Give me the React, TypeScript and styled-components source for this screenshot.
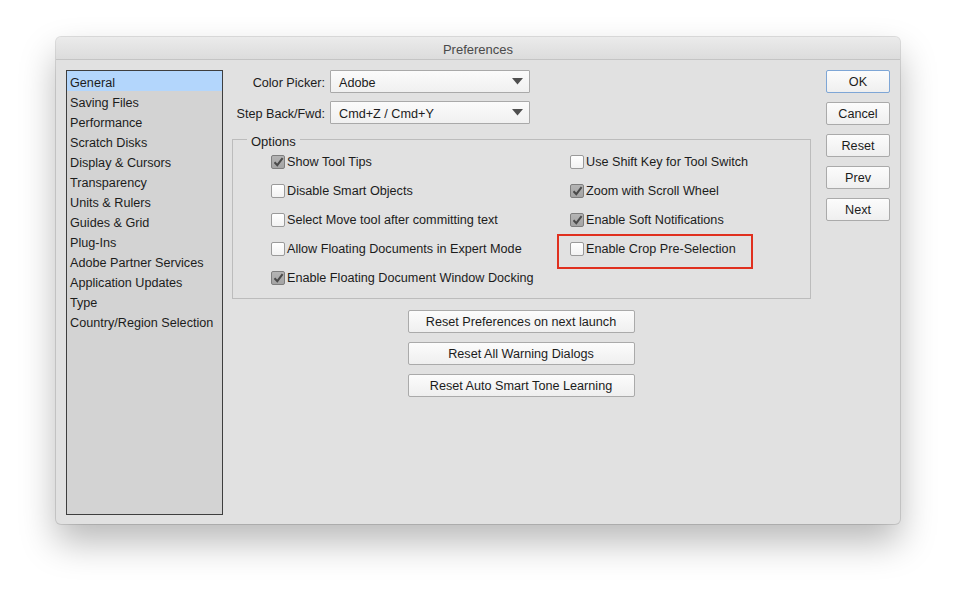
import React from "react";
import styled, { createGlobalStyle } from "styled-components";

const Global = createGlobalStyle`
  html, body { margin: 0; padding: 0; background: #ffffff; }
  body { font-family: "Liberation Sans", Arial, sans-serif; font-size: 12.65px; color: #1c1c1c; }
  * { box-sizing: border-box; }
`;

const Page = styled.div`
  width: 956px;
  height: 599px;
  padding: 37px 0 0 56px;
  background: #ffffff;
`;

const Window = styled.div`
  width: 844px;
  height: 487px;
  border-radius: 5px;
  background: #e1e1e1;
  box-shadow: 0 0 0 1px rgba(0, 0, 0, 0.12), 0 18px 36px rgba(0, 0, 0, 0.28);
  display: flex;
  flex-direction: column;
  overflow: hidden;
`;

const TitleBar = styled.div`
  height: 23px;
  flex: none;
  display: flex;
  align-items: center;
  justify-content: center;
  padding-top: 2px;
  background: linear-gradient(#ebebeb, #dcdcdc);
  border-bottom: 1px solid #c4c4c4;
  color: #4a4a4a;
  font-size: 13px;
`;

const Body = styled.div`
  flex: 1;
  display: flex;
  padding: 10px;
  gap: 8px;
`;

const Sidebar = styled.ul`
  margin: 0;
  width: 157px;
  height: 445px;
  flex: none;
  list-style: none;
  padding: 0;
  background: #d3d3d3;
  border: 1px solid #3e3e3e;
`;

const SideItem = styled.li<{ $selected?: boolean }>`
  height: 20px;
  line-height: 24px;
  padding-left: 3px;
  white-space: nowrap;
  overflow: hidden;
  background: ${(p) => (p.$selected ? "#b3d6fc" : "transparent")};
`;

const Main = styled.div`
  width: 580px;
  flex: none;
  display: flex;
  flex-direction: column;
`;

const FormGrid = styled.div`
  display: grid;
  grid-template-columns: 94px 200px;
  grid-auto-rows: 23px;
  column-gap: 5px;
  row-gap: 8px;
`;

const Label = styled.label`
  display: flex;
  align-items: center;
  justify-content: flex-end;
  padding-top: 2px;
  white-space: nowrap;
`;

const Select = styled.div`
  display: flex;
  align-items: center;
  justify-content: space-between;
  padding: 2px 6px 0 8px;
  background: linear-gradient(#fbfbfb, #f0f0f0);
  border: 1px solid #a9a9a9;
  border-radius: 1px;
`;

const Arrow = styled.svg`
  width: 11px;
  height: 7px;
  margin-top: -2px;
`;

const Group = styled.fieldset`
  margin: 5px 0 0 1px;
  padding: 4px 0 12px 14px;
  border: 1px solid #bcbcbc;
  border-radius: 0;
`;

const Legend = styled.legend`
  margin-left: 0;
  padding: 5px 4px 0 4px;
  line-height: 16px;
  font-size: 13px;
`;

const OptionGrid = styled.div`
  margin-left: 24px;
  display: grid;
  grid-template-columns: 299px 240px;
  grid-auto-rows: 16px;
  row-gap: 13px;
`;

const Option = styled.label<{ $highlight?: boolean }>`
  position: relative;
  display: flex;
  align-items: center;
  gap: 2px;
  white-space: nowrap;
  &::after {
    content: "";
    display: ${(p) => (p.$highlight ? "block" : "none")};
    position: absolute;
    left: -13px;
    top: -7px;
    width: 192px;
    height: 31px;
    border: 2px solid #e0301e;
    pointer-events: none;
  }
`;

const Box = styled.span<{ $checked?: boolean }>`
  width: 14px;
  height: 14px;
  flex: none;
  display: flex;
  align-items: center;
  justify-content: center;
  border: 1px solid ${(p) => (p.$checked ? "#7e7e7e" : "#9a9a9a")};
  border-radius: 2px;
  background: ${(p) => (p.$checked ? "linear-gradient(#b4b4b4, #a4a4a4)" : "linear-gradient(#ffffff, #f2f2f2)")};
`;

const Check = styled.svg`
  width: 11px;
  height: 10px;
`;

const ResetStack = styled.div`
  margin-top: 11px;
  display: flex;
  flex-direction: column;
  align-items: center;
  gap: 9px;
`;

const Button = styled.button<{ $wide?: boolean; $default?: boolean }>`
  width: ${(p) => (p.$wide ? "227px" : "64px")};
  height: 23px;
  padding: 1px 0 0;
  font-family: "Liberation Sans", Arial, sans-serif;
  font-size: 12.65px;
  color: #1c1c1c;
  background: linear-gradient(#fcfcfc, #efefef);
  border: 1px solid ${(p) => (p.$default ? "#7ea6d6" : "#aaaaaa")};
  border-radius: 2px;
`;

const Side = styled.div`
  margin-left: 7px;
  display: flex;
  flex-direction: column;
  gap: 9px;
`;

const sideItems = [
  "General",
  "Saving Files",
  "Performance",
  "Scratch Disks",
  "Display & Cursors",
  "Transparency",
  "Units & Rulers",
  "Guides & Grid",
  "Plug-Ins",
  "Adobe Partner Services",
  "Application Updates",
  "Type",
  "Country/Region Selection",
];

type Opt = { label: string; checked?: boolean; highlight?: boolean };

const options: Opt[] = [
  { label: "Show Tool Tips", checked: true },
  { label: "Use Shift Key for Tool Switch" },
  { label: "Disable Smart Objects" },
  { label: "Zoom with Scroll Wheel", checked: true },
  { label: "Select Move tool after committing text" },
  { label: "Enable Soft Notifications", checked: true },
  { label: "Allow Floating Documents in Expert Mode" },
  { label: "Enable Crop Pre-Selection", highlight: true },
  { label: "Enable Floating Document Window Docking", checked: true },
];

const DropArrow = () => (
  <Arrow viewBox="0 0 11 7">
    <path d="M0 0 H11 L5.5 6.5 Z" fill="#4f4f4f" />
  </Arrow>
);

export default function App() {
  return (
    <Page>
      <Global />
      <Window>
        <TitleBar>Preferences</TitleBar>
        <Body>
          <Sidebar>
            {sideItems.map((s, i) => (
              <SideItem key={s} $selected={i === 0}>
                {s}
              </SideItem>
            ))}
          </Sidebar>
          <Main>
            <FormGrid>
              <Label>Color Picker:</Label>
              <Select>
                <span>Adobe</span>
                <DropArrow />
              </Select>
              <Label>Step Back/Fwd:</Label>
              <Select>
                <span>Cmd+Z / Cmd+Y</span>
                <DropArrow />
              </Select>
            </FormGrid>
            <Group>
              <Legend>Options</Legend>
              <OptionGrid>
                {options.map((o) => (
                  <Option key={o.label} $highlight={o.highlight}>
                    <Box $checked={o.checked}>
                      {o.checked && (
                        <Check viewBox="0 0 11 10">
                          <path d="M1.5 5.2 L4.3 8.2 L9.6 1.2" fill="none" stroke="#4a4a4a" strokeWidth="2" />
                        </Check>
                      )}
                    </Box>
                    <span>{o.label}</span>
                  </Option>
                ))}
              </OptionGrid>
            </Group>
            <ResetStack>
              <Button $wide>Reset Preferences on next launch</Button>
              <Button $wide>Reset All Warning Dialogs</Button>
              <Button $wide>Reset Auto Smart Tone Learning</Button>
            </ResetStack>
          </Main>
          <Side>
            <Button $default>OK</Button>
            <Button>Cancel</Button>
            <Button>Reset</Button>
            <Button>Prev</Button>
            <Button>Next</Button>
          </Side>
        </Body>
      </Window>
    </Page>
  );
}
